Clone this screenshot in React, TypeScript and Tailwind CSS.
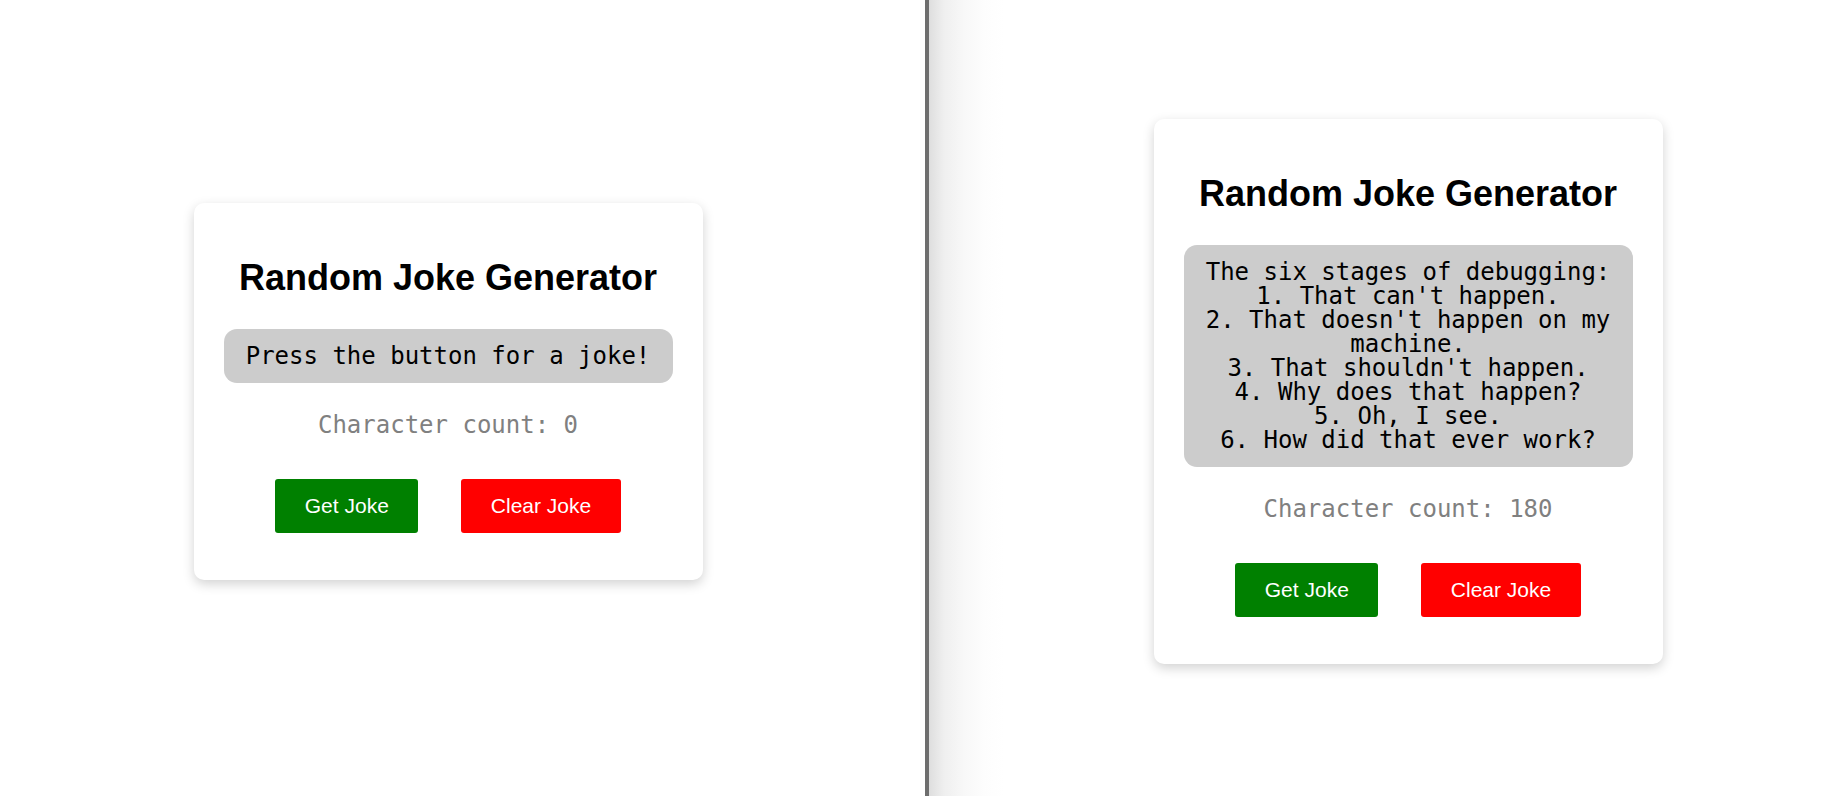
import React from 'react'

const joke =
  "The six stages of debugging:\n1. That can't happen.\n2. That doesn't happen on my machine.\n3. That shouldn't happen.\n4. Why does that happen?\n5. Oh, I see.\n6. How did that ever work?"

const sans = "font-['Liberation_Sans',Arial,sans-serif]"
const mono = "font-['DejaVu_Sans_Mono','Liberation_Mono',monospace]"

function JokeCard({ text, count }: { text: string; count: number }) {
  return (
    <div className="w-[509px] rounded-[10px] bg-white px-[30px] pt-[54px] pb-[47px] shadow-[0_4px_12px_rgba(0,0,0,0.18)]">
      <h1 className={`${sans} text-center text-[36px] font-bold leading-[41px] text-black`}>
        Random Joke Generator
      </h1>
      <div className={`${mono} mt-[31px] rounded-[13px] bg-[#cccccc] px-4 py-[15px] text-center text-[24px] leading-[24px] whitespace-pre-line text-black`}>
        {text}
      </div>
      <p className={`${mono} mt-[28px] text-center text-[24px] leading-[28px] text-[#808080]`}>
        Character count: {count}
      </p>
      <div className="mt-[40px] flex justify-center gap-[43px]">
        <button className={`${sans} flex h-[54px] items-center rounded-[3px] bg-[#008000] px-[29.5px] text-[21px] leading-[24px] text-white`}>
          Get Joke
        </button>
        <button className={`${sans} flex h-[54px] items-center rounded-[3px] bg-[#ff0000] px-[29.5px] text-[21px] leading-[24px] text-white`}>
          Clear Joke
        </button>
      </div>
    </div>
  )
}

export default function App() {
  return (
    <div className="flex h-[796px] w-[1840px] bg-white">
      <div className="flex w-[925px] shrink-0 items-center justify-center pr-[29px] pb-[13px]">
        <JokeCard text="Press the button for a joke!" count={0} />
      </div>
      <div className="w-[4px] shrink-0 bg-[#6e6e6e]" />
      <div className="flex flex-1 items-center justify-center bg-[linear-gradient(90deg,#dedede_0px,#efefef_15px,#f8f8f8_35px,#fdfdfd_55px,#ffffff_75px)] pl-[47px] pb-[13px]">
        <JokeCard text={joke} count={joke.length} />
      </div>
    </div>
  )
}
